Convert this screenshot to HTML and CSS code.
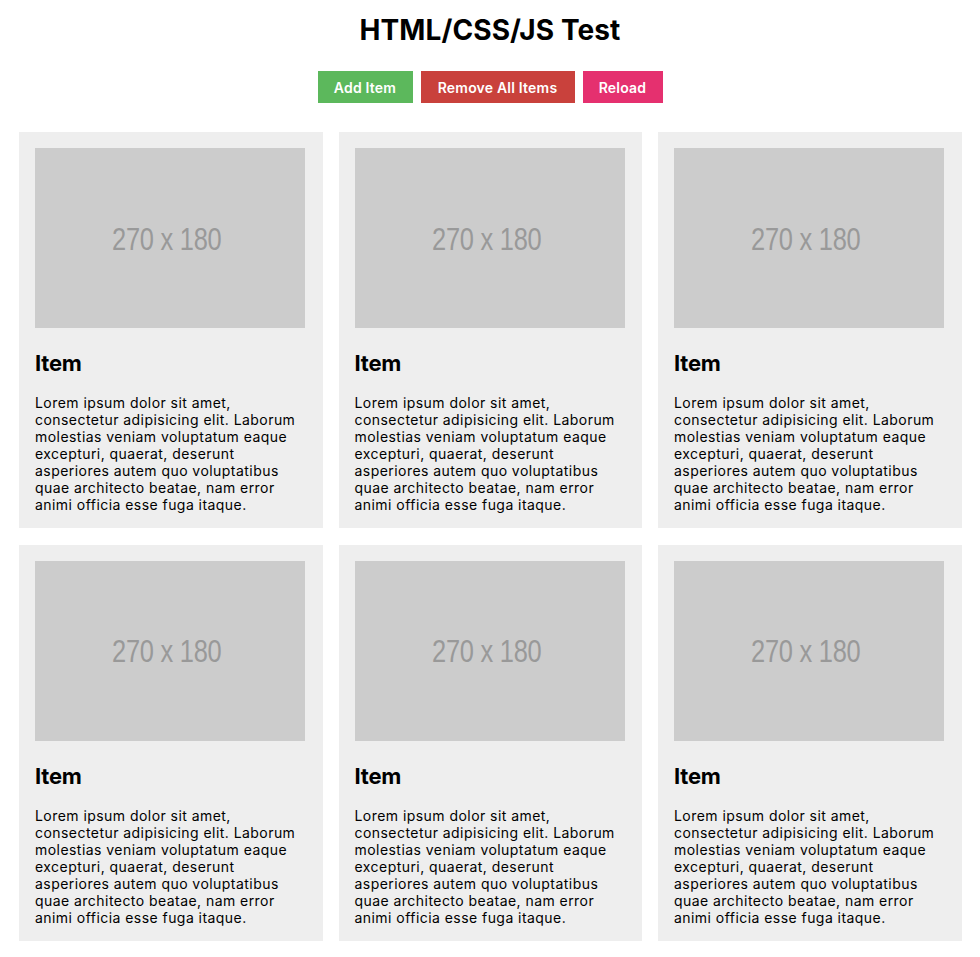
FILE: index.html
```html
<!DOCTYPE html>
<html>
<head>
<meta charset="utf-8">
<title>HTML/CSS/JS Test</title>
<link rel="stylesheet" href="styles.css">
</head>
<body>
<header class="header">
  <h1 class="title">HTML/CSS/JS Test</h1>
  <div class="actions">
    <button class="btn btn-add">Add Item</button>
    <button class="btn btn-remove">Remove All Items</button>
    <button class="btn btn-reload">Reload</button>
  </div>
</header>
<main class="grid">
  <article class="card">
    <div class="thumb"><span class="thumb-label">270 x 180</span></div>
    <h2 class="card-title">Item</h2>
    <p class="card-text">Lorem ipsum dolor sit amet, consectetur adipisicing elit. Laborum molestias veniam voluptatum eaque excepturi, quaerat, deserunt asperiores autem quo voluptatibus quae architecto beatae, nam error animi officia esse fuga itaque.</p>
  </article>
  <article class="card">
    <div class="thumb"><span class="thumb-label">270 x 180</span></div>
    <h2 class="card-title">Item</h2>
    <p class="card-text">Lorem ipsum dolor sit amet, consectetur adipisicing elit. Laborum molestias veniam voluptatum eaque excepturi, quaerat, deserunt asperiores autem quo voluptatibus quae architecto beatae, nam error animi officia esse fuga itaque.</p>
  </article>
  <article class="card">
    <div class="thumb"><span class="thumb-label">270 x 180</span></div>
    <h2 class="card-title">Item</h2>
    <p class="card-text">Lorem ipsum dolor sit amet, consectetur adipisicing elit. Laborum molestias veniam voluptatum eaque excepturi, quaerat, deserunt asperiores autem quo voluptatibus quae architecto beatae, nam error animi officia esse fuga itaque.</p>
  </article>
  <article class="card">
    <div class="thumb"><span class="thumb-label">270 x 180</span></div>
    <h2 class="card-title">Item</h2>
    <p class="card-text">Lorem ipsum dolor sit amet, consectetur adipisicing elit. Laborum molestias veniam voluptatum eaque excepturi, quaerat, deserunt asperiores autem quo voluptatibus quae architecto beatae, nam error animi officia esse fuga itaque.</p>
  </article>
  <article class="card">
    <div class="thumb"><span class="thumb-label">270 x 180</span></div>
    <h2 class="card-title">Item</h2>
    <p class="card-text">Lorem ipsum dolor sit amet, consectetur adipisicing elit. Laborum molestias veniam voluptatum eaque excepturi, quaerat, deserunt asperiores autem quo voluptatibus quae architecto beatae, nam error animi officia esse fuga itaque.</p>
  </article>
  <article class="card">
    <div class="thumb"><span class="thumb-label">270 x 180</span></div>
    <h2 class="card-title">Item</h2>
    <p class="card-text">Lorem ipsum dolor sit amet, consectetur adipisicing elit. Laborum molestias veniam voluptatum eaque excepturi, quaerat, deserunt asperiores autem quo voluptatibus quae architecto beatae, nam error animi officia esse fuga itaque.</p>
  </article>
</main>
</body>
</html>
```

FILE: styles.css
```css
* { box-sizing: border-box; }

body {
  margin: 0;
  background: #fff;
  color: #000;
  font-family: Inter, "Liberation Sans", Arial, sans-serif;
}

.header {
  display: flex;
  flex-direction: column;
  align-items: center;
  padding-top: 13px;
}

.title {
  margin: 0;
  font-size: 28px;
  line-height: 34px;
  font-weight: 700;
  letter-spacing: 0.1px;
}

.actions {
  display: flex;
  gap: 8px;
  margin-top: 24px;
}

.btn {
  border: 0;
  height: 32px;
  padding: 0;
  color: #fff;
  font-family: inherit;
  font-size: 14px;
  font-weight: 600;
  letter-spacing: 0.2px;
  cursor: pointer;
}

.btn-add { background: #5cb85c; width: 95px; }
.btn-remove { background: #c9413c; width: 154px; }
.btn-reload { background: #e5306f; width: 80px; }

.grid {
  display: grid;
  grid-template-columns: repeat(3, 1fr);
  gap: 16.5px 16px;
  padding: 29px 18.5px 16px 19px;
}

.card {
  background: #eee;
  padding: 16px 16px 15px;
}

.thumb {
  width: 270px;
  height: 180px;
  background: #ccc;
  color: #999;
  display: flex;
  align-items: center;
  justify-content: center;
  padding: 3px 6px 0 0;
  font-family: "Liberation Sans", Arial, sans-serif;
  font-size: 31px;
}

.thumb-label {
  display: inline-block;
  transform: scaleX(0.82);
  letter-spacing: -0.3px;
}

.card-title {
  margin: 21px 0 0;
  font-size: 22px;
  line-height: 28px;
  font-weight: 700;
  letter-spacing: -0.2px;
}

.card-text {
  margin: 17px 0 0;
  width: 270px;
  font-size: 14px;
  line-height: 17px;
  letter-spacing: 0.45px;
}
```
